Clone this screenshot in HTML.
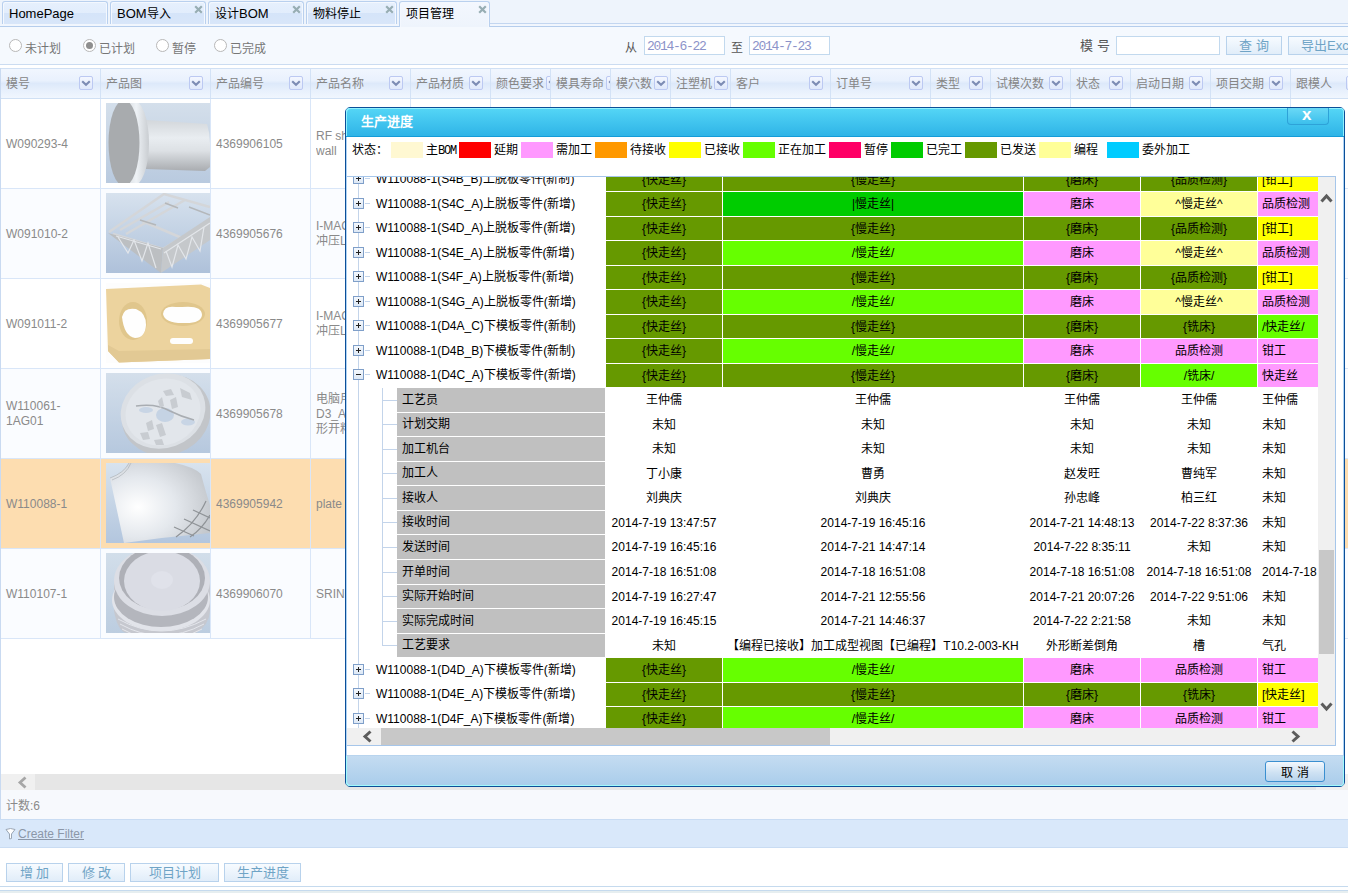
<!DOCTYPE html>
<html lang="zh-CN"><head><meta charset="utf-8"><title>项目管理</title>
<style>
*{box-sizing:border-box;margin:0;padding:0}
html,body{width:1348px;height:893px;overflow:hidden}
body{position:relative;font-family:"Liberation Sans",sans-serif;font-size:12px;background:#fff;color:#000}
.a{position:absolute}
.tab{position:absolute;top:1px;height:23px;box-shadow:inset 1px 1px 0 #f4f8fe,inset -1px 0 0 #f4f8fe;border:1px solid #b9d0ee;border-bottom:none;border-radius:3px 3px 0 0;
 background:linear-gradient(#e6f0fd 0%,#e2edfc 50%,#d5e4f9 52%,#d8e6f9 100%);font-size:13px;line-height:16px;padding:4px 0 0 6px;white-space:nowrap}
.tab .x{position:absolute;top:0px;font-size:15px;font-weight:bold;color:#9fb5bb;line-height:15px}
.hd{position:absolute;top:69px;height:29px;font-size:12px;color:#888;line-height:29px;padding-left:6px;white-space:nowrap;overflow:hidden}
.dd{position:absolute;top:77px;width:14px;height:14px;border:1px solid #bcc9f2;border-radius:2px;background:linear-gradient(#f4f7ff,#dfe8fb)}
.dd svg{position:absolute;left:0;top:0}
.vl{position:absolute;width:1px;background:#d9e6f8}
.hl{position:absolute;height:1px;background:#d9e6f8}
.cell{position:absolute;font-size:12px;color:#8a8a8a;line-height:16px}
.btn{position:absolute;height:19px;border:1px solid #b8d2ec;background:linear-gradient(#f7fbff,#e1edf9);color:#6fa4c6;font-size:13px;text-align:center;line-height:17px;white-space:nowrap}
.lg{position:absolute;top:142px;width:32px;height:16px}
.lt{position:absolute;top:141px;font-size:12px;line-height:18px;color:#000;white-space:nowrap}
.tr{position:absolute;left:347px;width:971px}
.c{position:absolute;top:0;height:100%;text-align:center;font-size:12px;line-height:16px;white-space:nowrap;overflow:hidden;display:flex;align-items:center;justify-content:center;color:#000}
.c6{justify-content:flex-start;padding-left:4px}
</style></head><body>

<div class="a" style="left:0;top:0;width:1348px;height:26px;background:#eef4fc"></div>
<div class="a" style="left:0;top:26px;width:1348px;height:1px;background:#b5cdec"></div>
<div class="a" style="left:0;top:24px;width:1348px;height:2px;background:#f1f6fd"></div>
<div class="a" style="left:489px;top:23px;width:859px;height:1px;background:#c3d6f0"></div>
<div class="tab" style="left:2px;width:106px;">HomePage</div>
<div class="tab" style="left:110px;width:96px;">BOM<span style="font-size:12px">导入</span><svg class="x" style="left:83px;top:3px" width="9" height="9"><path d="M1.2 1.2 L7.8 7.8 M7.8 1.2 L1.2 7.8" stroke="#97adb3" stroke-width="2.2"/></svg></div>
<div class="tab" style="left:208px;width:96px;"><span style="font-size:12px">设计</span>BOM<svg class="x" style="left:83px;top:3px" width="9" height="9"><path d="M1.2 1.2 L7.8 7.8 M7.8 1.2 L1.2 7.8" stroke="#97adb3" stroke-width="2.2"/></svg></div>
<div class="tab" style="left:306px;width:91px;"><span style="font-size:12px">物料停止</span><svg class="x" style="left:78px;top:3px" width="9" height="9"><path d="M1.2 1.2 L7.8 7.8 M7.8 1.2 L1.2 7.8" stroke="#97adb3" stroke-width="2.2"/></svg></div>
<div class="tab" style="left:399px;width:91px;height:26px;background:linear-gradient(#f3f7fe,#eef4fc);z-index:2;"><span style="font-size:12px">项目管理</span><svg class="x" style="left:78px;top:3px" width="9" height="9"><path d="M1.2 1.2 L7.8 7.8 M7.8 1.2 L1.2 7.8" stroke="#97adb3" stroke-width="2.2"/></svg></div>
<div class="a" style="left:0;top:27px;width:1348px;height:37px;background:#f5f9fe"></div>
<div class="a" style="left:0;top:64px;width:1348px;height:1px;background:#cbdcf1"></div>
<div class="a" style="left:9px;top:39px;width:13px;height:13px;border-radius:50%;border:1px solid #b8b8b8;background:#fff"></div>
<div class="a" style="left:25px;top:41px;font-size:12px;color:#767676;line-height:16px">未计划</div>
<div class="a" style="left:83px;top:39px;width:13px;height:13px;border-radius:50%;border:1px solid #b8b8b8;background:#fff"></div>
<div class="a" style="left:86px;top:42px;width:7px;height:7px;border-radius:50%;background:#8e8e8e"></div>
<div class="a" style="left:99px;top:41px;font-size:12px;color:#767676;line-height:16px">已计划</div>
<div class="a" style="left:156px;top:39px;width:13px;height:13px;border-radius:50%;border:1px solid #b8b8b8;background:#fff"></div>
<div class="a" style="left:172px;top:41px;font-size:12px;color:#767676;line-height:16px">暂停</div>
<div class="a" style="left:214px;top:39px;width:13px;height:13px;border-radius:50%;border:1px solid #b8b8b8;background:#fff"></div>
<div class="a" style="left:230px;top:41px;font-size:12px;color:#767676;line-height:16px">已完成</div>
<div class="a" style="left:625px;top:40px;font-size:12px;color:#555;line-height:16px">从</div>
<div class="a" style="left:731px;top:40px;font-size:12px;color:#555;line-height:16px">至</div>
<div class="a" style="left:644px;top:36px;width:81px;height:19px;border:1px solid #c2d9ee;background:#fff;font-family:'Liberation Mono',monospace;font-size:13px;letter-spacing:-1.3px;color:#8c93c9;padding-left:2px;line-height:19px">2014-6-22</div>
<div class="a" style="left:749px;top:36px;width:81px;height:19px;border:1px solid #c2d9ee;background:#fff;font-family:'Liberation Mono',monospace;font-size:13px;letter-spacing:-1.3px;color:#8c93c9;padding-left:2px;line-height:19px">2014-7-23</div>
<div class="a" style="left:1080px;top:38px;font-size:13px;color:#555;line-height:16px;letter-spacing:0px">模 号</div>
<div class="a" style="left:1116px;top:36px;width:104px;height:19px;border:1px solid #c2d9ee;background:#fff"></div>
<div class="btn" style="left:1226px;top:36px;width:56px">查 询</div>
<div class="btn" style="left:1288px;top:36px;width:80px;text-align:left;padding-left:12px">导出Excel</div>
<div class="a" style="left:0;top:68px;width:1348px;height:31px;border-top:1px solid #d0e0f4;border-bottom:1px solid #d0e0f4;background:linear-gradient(#f1f6fe 0%,#e9f1fd 40%,#dde9fa 50%,#e6effc 70%,#f0f6fe 100%)"></div>
<div class="a" style="left:0px;top:69px;width:100px;height:29px;overflow:hidden">
<div style="position:absolute;left:6px;top:1px;line-height:29px;font-size:12px;color:#858585;white-space:nowrap">模号</div>
<div class="dd" style="left:79px;top:7px"><svg width="12" height="12"><path d="M2.2 4.2 L6 7.8 L9.8 4.2" fill="none" stroke="#7d8cb4" stroke-width="2.2"/></svg></div>
</div>
<div class="a" style="left:100px;top:69px;width:110px;height:29px;overflow:hidden">
<div style="position:absolute;left:6px;top:1px;line-height:29px;font-size:12px;color:#858585;white-space:nowrap">产品图</div>
<div class="dd" style="left:89px;top:7px"><svg width="12" height="12"><path d="M2.2 4.2 L6 7.8 L9.8 4.2" fill="none" stroke="#7d8cb4" stroke-width="2.2"/></svg></div>
</div>
<div class="a" style="left:210px;top:69px;width:100px;height:29px;overflow:hidden">
<div style="position:absolute;left:6px;top:1px;line-height:29px;font-size:12px;color:#858585;white-space:nowrap">产品编号</div>
<div class="dd" style="left:79px;top:7px"><svg width="12" height="12"><path d="M2.2 4.2 L6 7.8 L9.8 4.2" fill="none" stroke="#7d8cb4" stroke-width="2.2"/></svg></div>
</div>
<div class="a" style="left:310px;top:69px;width:100px;height:29px;overflow:hidden">
<div style="position:absolute;left:6px;top:1px;line-height:29px;font-size:12px;color:#858585;white-space:nowrap">产品名称</div>
<div class="dd" style="left:79px;top:7px"><svg width="12" height="12"><path d="M2.2 4.2 L6 7.8 L9.8 4.2" fill="none" stroke="#7d8cb4" stroke-width="2.2"/></svg></div>
</div>
<div class="a" style="left:410px;top:69px;width:80px;height:29px;overflow:hidden">
<div style="position:absolute;left:6px;top:1px;line-height:29px;font-size:12px;color:#858585;white-space:nowrap">产品材质</div>
<div class="dd" style="left:59px;top:7px"><svg width="12" height="12"><path d="M2.2 4.2 L6 7.8 L9.8 4.2" fill="none" stroke="#7d8cb4" stroke-width="2.2"/></svg></div>
</div>
<div class="a" style="left:490px;top:69px;width:60px;height:29px;overflow:hidden">
<div style="position:absolute;left:6px;top:1px;line-height:29px;font-size:12px;color:#858585;white-space:nowrap">颜色要求</div>
<div class="dd" style="left:56px;top:7px"><svg width="12" height="12"><path d="M2.2 4.2 L6 7.8 L9.8 4.2" fill="none" stroke="#7d8cb4" stroke-width="2.2"/></svg></div>
</div>
<div class="a" style="left:550px;top:69px;width:60px;height:29px;overflow:hidden">
<div style="position:absolute;left:6px;top:1px;line-height:29px;font-size:12px;color:#858585;white-space:nowrap">模具寿命</div>
<div class="dd" style="left:56px;top:7px"><svg width="12" height="12"><path d="M2.2 4.2 L6 7.8 L9.8 4.2" fill="none" stroke="#7d8cb4" stroke-width="2.2"/></svg></div>
</div>
<div class="a" style="left:610px;top:69px;width:60px;height:29px;overflow:hidden">
<div style="position:absolute;left:6px;top:1px;line-height:29px;font-size:12px;color:#858585;white-space:nowrap">模穴数</div>
<div class="dd" style="left:44px;top:7px"><svg width="12" height="12"><path d="M2.2 4.2 L6 7.8 L9.8 4.2" fill="none" stroke="#7d8cb4" stroke-width="2.2"/></svg></div>
</div>
<div class="a" style="left:670px;top:69px;width:60px;height:29px;overflow:hidden">
<div style="position:absolute;left:6px;top:1px;line-height:29px;font-size:12px;color:#858585;white-space:nowrap">注塑机</div>
<div class="dd" style="left:44px;top:7px"><svg width="12" height="12"><path d="M2.2 4.2 L6 7.8 L9.8 4.2" fill="none" stroke="#7d8cb4" stroke-width="2.2"/></svg></div>
</div>
<div class="a" style="left:730px;top:69px;width:100px;height:29px;overflow:hidden">
<div style="position:absolute;left:6px;top:1px;line-height:29px;font-size:12px;color:#858585;white-space:nowrap">客户</div>
<div class="dd" style="left:79px;top:7px"><svg width="12" height="12"><path d="M2.2 4.2 L6 7.8 L9.8 4.2" fill="none" stroke="#7d8cb4" stroke-width="2.2"/></svg></div>
</div>
<div class="a" style="left:830px;top:69px;width:100px;height:29px;overflow:hidden">
<div style="position:absolute;left:6px;top:1px;line-height:29px;font-size:12px;color:#858585;white-space:nowrap">订单号</div>
<div class="dd" style="left:79px;top:7px"><svg width="12" height="12"><path d="M2.2 4.2 L6 7.8 L9.8 4.2" fill="none" stroke="#7d8cb4" stroke-width="2.2"/></svg></div>
</div>
<div class="a" style="left:930px;top:69px;width:60px;height:29px;overflow:hidden">
<div style="position:absolute;left:6px;top:1px;line-height:29px;font-size:12px;color:#858585;white-space:nowrap">类型</div>
<div class="dd" style="left:39px;top:7px"><svg width="12" height="12"><path d="M2.2 4.2 L6 7.8 L9.8 4.2" fill="none" stroke="#7d8cb4" stroke-width="2.2"/></svg></div>
</div>
<div class="a" style="left:990px;top:69px;width:80px;height:29px;overflow:hidden">
<div style="position:absolute;left:6px;top:1px;line-height:29px;font-size:12px;color:#858585;white-space:nowrap">试模次数</div>
<div class="dd" style="left:59px;top:7px"><svg width="12" height="12"><path d="M2.2 4.2 L6 7.8 L9.8 4.2" fill="none" stroke="#7d8cb4" stroke-width="2.2"/></svg></div>
</div>
<div class="a" style="left:1070px;top:69px;width:60px;height:29px;overflow:hidden">
<div style="position:absolute;left:6px;top:1px;line-height:29px;font-size:12px;color:#858585;white-space:nowrap">状态</div>
<div class="dd" style="left:39px;top:7px"><svg width="12" height="12"><path d="M2.2 4.2 L6 7.8 L9.8 4.2" fill="none" stroke="#7d8cb4" stroke-width="2.2"/></svg></div>
</div>
<div class="a" style="left:1130px;top:69px;width:80px;height:29px;overflow:hidden">
<div style="position:absolute;left:6px;top:1px;line-height:29px;font-size:12px;color:#858585;white-space:nowrap">启动日期</div>
<div class="dd" style="left:59px;top:7px"><svg width="12" height="12"><path d="M2.2 4.2 L6 7.8 L9.8 4.2" fill="none" stroke="#7d8cb4" stroke-width="2.2"/></svg></div>
</div>
<div class="a" style="left:1210px;top:69px;width:80px;height:29px;overflow:hidden">
<div style="position:absolute;left:6px;top:1px;line-height:29px;font-size:12px;color:#858585;white-space:nowrap">项目交期</div>
<div class="dd" style="left:59px;top:7px"><svg width="12" height="12"><path d="M2.2 4.2 L6 7.8 L9.8 4.2" fill="none" stroke="#7d8cb4" stroke-width="2.2"/></svg></div>
</div>
<div class="a" style="left:1290px;top:69px;width:58px;height:29px;overflow:hidden">
<div style="position:absolute;left:6px;top:1px;line-height:29px;font-size:12px;color:#858585;white-space:nowrap">跟模人</div>
<div class="dd" style="left:56px;top:7px"><svg width="12" height="12"><path d="M2.2 4.2 L6 7.8 L9.8 4.2" fill="none" stroke="#7d8cb4" stroke-width="2.2"/></svg></div>
</div>
<div class="vl" style="left:100px;top:69px;height:29px;background:#d3e2f6"></div>
<div class="vl" style="left:210px;top:69px;height:29px;background:#d3e2f6"></div>
<div class="vl" style="left:310px;top:69px;height:29px;background:#d3e2f6"></div>
<div class="vl" style="left:410px;top:69px;height:29px;background:#d3e2f6"></div>
<div class="vl" style="left:490px;top:69px;height:29px;background:#d3e2f6"></div>
<div class="vl" style="left:550px;top:69px;height:29px;background:#d3e2f6"></div>
<div class="vl" style="left:610px;top:69px;height:29px;background:#d3e2f6"></div>
<div class="vl" style="left:670px;top:69px;height:29px;background:#d3e2f6"></div>
<div class="vl" style="left:730px;top:69px;height:29px;background:#d3e2f6"></div>
<div class="vl" style="left:830px;top:69px;height:29px;background:#d3e2f6"></div>
<div class="vl" style="left:930px;top:69px;height:29px;background:#d3e2f6"></div>
<div class="vl" style="left:990px;top:69px;height:29px;background:#d3e2f6"></div>
<div class="vl" style="left:1070px;top:69px;height:29px;background:#d3e2f6"></div>
<div class="vl" style="left:1130px;top:69px;height:29px;background:#d3e2f6"></div>
<div class="vl" style="left:1210px;top:69px;height:29px;background:#d3e2f6"></div>
<div class="vl" style="left:1290px;top:69px;height:29px;background:#d3e2f6"></div>
<div class="a" style="left:0;top:99px;width:1348px;height:90px;background:#ffffff"></div>
<div class="hl" style="left:0;top:188px;width:1348px"></div>
<div class="a" style="left:6px;top:99px;height:90px;display:flex;align-items:center;font-size:12px;color:#8a8a8a;line-height:15px">W090293-4</div>
<div class="a" style="left:216px;top:99px;height:90px;display:flex;align-items:center;font-size:12px;color:#8a8a8a;line-height:15px">4369906105</div>
<div class="a" style="left:316px;top:99px;height:90px;display:flex;align-items:center;font-size:12px;color:#8a8a8a;line-height:15px;width:40px;overflow:hidden;white-space:nowrap">RF sh<br>wall</div>
<div class="a" style="left:106px;top:103px;width:104px;height:80px;overflow:hidden"><svg width="104" height="80" viewBox="0 0 104 80"><defs>
<linearGradient id="b1" x1="0" y1="0" x2="0" y2="1"><stop offset="0" stop-color="#d4dfeb"/><stop offset="1" stop-color="#b9cadf"/></linearGradient>
<linearGradient id="c1" x1="0" y1="0" x2="0" y2="1"><stop offset="0" stop-color="#d3d7db"/><stop offset=".35" stop-color="#e9edf1"/><stop offset=".6" stop-color="#dde1e5"/><stop offset="1" stop-color="#a9acb0"/></linearGradient>
<linearGradient id="r1" x1="0" y1="0" x2="1" y2="0"><stop offset="0" stop-color="#c3c7cb"/><stop offset=".6" stop-color="#eef2f6"/><stop offset="1" stop-color="#c9cdd1"/></linearGradient></defs>
<rect width="104" height="80" fill="url(#b1)"/>
<path d="M40 17 L101 21 Q104 30 104 40 L104 64 L99 68 L40 66 Z" fill="url(#c1)"/>
<ellipse cx="27" cy="40" rx="16" ry="43" fill="url(#r1)"/>
<ellipse cx="18" cy="40" rx="15.5" ry="43" fill="#a8abae"/>
</svg></div>
<div class="a" style="left:0;top:189px;width:1348px;height:90px;background:#fafcff"></div>
<div class="hl" style="left:0;top:278px;width:1348px"></div>
<div class="a" style="left:6px;top:189px;height:90px;display:flex;align-items:center;font-size:12px;color:#8a8a8a;line-height:15px">W091010-2</div>
<div class="a" style="left:216px;top:189px;height:90px;display:flex;align-items:center;font-size:12px;color:#8a8a8a;line-height:15px">4369905676</div>
<div class="a" style="left:316px;top:189px;height:90px;display:flex;align-items:center;font-size:12px;color:#8a8a8a;line-height:15px;width:40px;overflow:hidden;white-space:nowrap">I-MAC<br>冲压L</div>
<div class="a" style="left:106px;top:193px;width:104px;height:80px;overflow:hidden"><svg width="104" height="80" viewBox="0 0 104 80"><defs>
<linearGradient id="b2" x1="0" y1="0" x2="0" y2="1"><stop offset="0" stop-color="#d7e2ee"/><stop offset="1" stop-color="#aec1da"/></linearGradient></defs>
<rect width="104" height="80" fill="url(#b2)"/>
<g fill="none" stroke="#d4d6d9" stroke-width="2.5">
<path d="M3 39 L58 1 L104 14"/><path d="M7 41 L57 56 L104 27"/><path d="M20 41 L79 7"/><path d="M36 28 L76 45"/><path d="M14 37 L63 9"/></g>
<g fill="none" stroke="#b4b7ba" stroke-width="1.5"><path d="M59 10 L72 15"/><path d="M83 14 L104 22"/><path d="M34 27 L50 32"/></g>
<path d="M2 40 L57 55 L55 80 Z" fill="#bcbfc2"/>
<path d="M57 55 L104 24 L104 47 L55 80 Z" fill="#c5c8cb"/>
<g fill="none" stroke="#e3e6ea" stroke-width="1.2">
<path d="M12 44 L22 60 L28 47 L36 68 L42 50 L50 75"/><path d="M60 58 L66 74 L72 52 L80 66 L86 44 L94 58 L98 34"/><path d="M10 43 L55 56"/><path d="M58 60 L104 30"/></g>
</svg></div>
<div class="a" style="left:0;top:279px;width:1348px;height:90px;background:#ffffff"></div>
<div class="hl" style="left:0;top:368px;width:1348px"></div>
<div class="a" style="left:6px;top:279px;height:90px;display:flex;align-items:center;font-size:12px;color:#8a8a8a;line-height:15px">W091011-2</div>
<div class="a" style="left:216px;top:279px;height:90px;display:flex;align-items:center;font-size:12px;color:#8a8a8a;line-height:15px">4369905677</div>
<div class="a" style="left:316px;top:279px;height:90px;display:flex;align-items:center;font-size:12px;color:#8a8a8a;line-height:15px;width:40px;overflow:hidden;white-space:nowrap">I-MAC<br>冲压L</div>
<div class="a" style="left:106px;top:283px;width:104px;height:80px;overflow:hidden"><svg width="104" height="80" viewBox="0 0 104 80">
<rect width="104" height="80" fill="#fdfdfd"/>
<path d="M0 6 L95 1.5 L104 5 L104 76 L13 79.5 L2 68 Z" fill="#ecd39e"/>
<path d="M2 62 L13 68 L104 66 L104 76 L13 79.5 L2 68 Z" fill="#e2c994"/>
<ellipse cx="27" cy="38" rx="14" ry="19" fill="#e0c68c"/>
<path d="M16 34 Q18 24 30 26 Q40 30 40 42 Q39 55 29 55 Q18 53 16 34 Z" fill="#fefefe"/>
<ellipse cx="77" cy="31" rx="22" ry="12" fill="#e0c68c"/>
<path d="M57 31 Q58 22 70 24 L76 24 Q96 22 96 32 Q95 40 80 40 Q59 41 57 31 Z" fill="#fefefe"/>
<rect x="64" y="55" width="23" height="6" rx="3" fill="#fefefe"/>
</svg></div>
<div class="a" style="left:0;top:369px;width:1348px;height:90px;background:#fafcff"></div>
<div class="hl" style="left:0;top:458px;width:1348px"></div>
<div class="a" style="left:6px;top:369px;height:90px;display:flex;align-items:center;font-size:12px;color:#8a8a8a;line-height:15px">W110061-<br>1AG01</div>
<div class="a" style="left:216px;top:369px;height:90px;display:flex;align-items:center;font-size:12px;color:#8a8a8a;line-height:15px">4369905678</div>
<div class="a" style="left:316px;top:369px;height:90px;display:flex;align-items:center;font-size:12px;color:#8a8a8a;line-height:15px;width:40px;overflow:hidden;white-space:nowrap">电脑用<br>D3_A<br>形开料</div>
<div class="a" style="left:106px;top:373px;width:104px;height:80px;overflow:hidden"><svg width="104" height="80" viewBox="0 0 104 80"><defs>
<linearGradient id="b4" x1="0" y1="0" x2="0" y2="1"><stop offset="0" stop-color="#d4dfeb"/><stop offset="1" stop-color="#b6c8de"/></linearGradient></defs>
<rect width="104" height="80" fill="url(#b4)"/>
<ellipse cx="60" cy="42" rx="45" ry="40" transform="rotate(-20 60 42)" fill="#c2c5c9"/>
<ellipse cx="57" cy="38" rx="43" ry="37" transform="rotate(-20 57 38)" fill="#dce0e5"/>
<ellipse cx="57" cy="39" rx="38" ry="33" transform="rotate(-20 57 39)" fill="#e2e6eb"/>
<ellipse cx="59" cy="42" rx="9" ry="7" fill="#c5d3e4"/><ellipse cx="40" cy="37" rx="7" ry="3" fill="#c8d5e5"/><ellipse cx="82" cy="49" rx="7" ry="3.5" fill="#c8d5e5"/>
<path d="M30 33 Q50 30 64 38 Q76 44 88 47" fill="none" stroke="#a9adb2" stroke-width="1.5"/>
<g fill="#c8ccd1"><path d="M57 18 L65 16 L68 22 L60 23 Z"/><path d="M74 15 L84 20 L86 27 L76 24 Z"/><path d="M52 28 L56 24 L58 33 L54 35 Z"/><path d="M64 27 L70 24 L72 34 L66 36 Z"/>
<path d="M40 50 L46 47 L48 56 L42 58 Z"/><path d="M50 52 L56 50 L60 62 L54 64 Z"/><path d="M34 60 L42 59 L44 66 L37 67 Z"/><path d="M48 67 L56 66 L58 72 L50 72 Z"/></g>
</svg></div>
<div class="a" style="left:0;top:459px;width:1348px;height:90px;background:#fdddb0"></div>
<div class="hl" style="left:0;top:548px;width:1348px"></div>
<div class="a" style="left:6px;top:459px;height:90px;display:flex;align-items:center;font-size:12px;color:#8a8a8a;line-height:15px">W110088-1</div>
<div class="a" style="left:216px;top:459px;height:90px;display:flex;align-items:center;font-size:12px;color:#8a8a8a;line-height:15px">4369905942</div>
<div class="a" style="left:316px;top:459px;height:90px;display:flex;align-items:center;font-size:12px;color:#8a8a8a;line-height:15px;width:40px;overflow:hidden;white-space:nowrap">plate</div>
<div class="a" style="left:106px;top:463px;width:104px;height:80px;overflow:hidden"><svg width="104" height="80" viewBox="0 0 104 80"><defs>
<linearGradient id="b5" x1="0" y1="0" x2="0" y2="1"><stop offset="0" stop-color="#d8e3ee"/><stop offset="1" stop-color="#b3c6de"/></linearGradient>
<radialGradient id="w5" cx=".28" cy=".55" r=".75"><stop offset="0" stop-color="#ffffff"/><stop offset=".5" stop-color="#e4e8ed"/><stop offset="1" stop-color="#c4c8cd"/></radialGradient></defs>
<rect width="104" height="80" fill="url(#b5)"/>
<path d="M4 15 Q18 10 23 0 L69 0 Q88 4 95 11 Q100 30 104 42 L104 70 Q60 74 18 80 Z" fill="url(#w5)"/>
<path d="M4 15 Q18 10 23 0 M6 17 Q20 12 25 0" fill="none" stroke="#aeb3b8" stroke-width=".7"/>
<g fill="none" stroke="#8f9397" stroke-width="1.2"><path d="M87 47 L104 55"/><path d="M78 56 L104 68"/><path d="M68 64 L88 73"/><path d="M100 38 Q90 60 70 74"/><path d="M104 52 Q96 66 84 74"/></g>
</svg></div>
<div class="a" style="left:0;top:549px;width:1348px;height:90px;background:#fafcff"></div>
<div class="hl" style="left:0;top:638px;width:1348px"></div>
<div class="a" style="left:6px;top:549px;height:90px;display:flex;align-items:center;font-size:12px;color:#8a8a8a;line-height:15px">W110107-1</div>
<div class="a" style="left:216px;top:549px;height:90px;display:flex;align-items:center;font-size:12px;color:#8a8a8a;line-height:15px">4369906070</div>
<div class="a" style="left:316px;top:549px;height:90px;display:flex;align-items:center;font-size:12px;color:#8a8a8a;line-height:15px;width:40px;overflow:hidden;white-space:nowrap">SRING</div>
<div class="a" style="left:106px;top:553px;width:104px;height:80px;overflow:hidden"><svg width="104" height="80" viewBox="0 0 104 80"><defs>
<linearGradient id="b6" x1="0" y1="0" x2="0" y2="1"><stop offset="0" stop-color="#d2deea"/><stop offset="1" stop-color="#bccde0"/></linearGradient></defs>
<rect width="104" height="80" fill="url(#b6)"/>
<path d="M8 28 L8 58 Q12 80 22 80 L90 80 Q103 72 104 58 L104 28 Z" fill="#c6c8cf"/>
<g fill="none" stroke="#e4e6ec" stroke-width="1"><path d="M12 66 Q55 90 100 66"/><path d="M14 71 Q55 94 98 71"/><path d="M16 76 Q55 98 96 76"/></g>
<ellipse cx="55" cy="47" rx="49" ry="31" fill="#e2e4ea"/>
<ellipse cx="55" cy="44" rx="47" ry="30" fill="#b4b6bd"/>
<ellipse cx="56" cy="28" rx="48" ry="35" fill="#dcdee5"/>
<ellipse cx="56" cy="25" rx="43" ry="32" fill="#aeb0b7"/>
<ellipse cx="56" cy="28" rx="38" ry="30" fill="#dadce4"/>
<ellipse cx="56" cy="27" rx="11" ry="9" fill="#e0e2ea"/>
</svg></div>
<div class="vl" style="left:100px;top:99px;height:540px"></div>
<div class="vl" style="left:210px;top:99px;height:540px"></div>
<div class="vl" style="left:310px;top:99px;height:540px"></div>
<div class="vl" style="left:410px;top:99px;height:540px"></div>
<div class="vl" style="left:490px;top:99px;height:540px"></div>
<div class="vl" style="left:550px;top:99px;height:540px"></div>
<div class="vl" style="left:610px;top:99px;height:540px"></div>
<div class="vl" style="left:670px;top:99px;height:540px"></div>
<div class="vl" style="left:730px;top:99px;height:540px"></div>
<div class="vl" style="left:830px;top:99px;height:540px"></div>
<div class="vl" style="left:930px;top:99px;height:540px"></div>
<div class="vl" style="left:990px;top:99px;height:540px"></div>
<div class="vl" style="left:1070px;top:99px;height:540px"></div>
<div class="vl" style="left:1130px;top:99px;height:540px"></div>
<div class="vl" style="left:1210px;top:99px;height:540px"></div>
<div class="vl" style="left:1290px;top:99px;height:540px"></div>
<div class="vl" style="left:0;top:68px;height:751px;background:#c9daf1;z-index:3"></div>
<div class="a" style="left:345px;top:107px;width:1000px;height:680px;border:1px solid #0c4f98;border-radius:5px;background:#fff;box-shadow:inset 0 0 0 1px #aed3f5;z-index:10"></div>
<div class="a" style="z-index:11;left:346px;top:108px;width:998px;height:29px;border-radius:4px 4px 0 0;background:linear-gradient(#55d6f6 0%,#45c8f0 40%,#2fb4e7 100%);border-bottom:1px solid #149cd8;box-shadow:inset 1px 1px 0 #90f2ff,inset -1px 0 0 #90f2ff"></div>
<div class="a" style="z-index:11;left:361px;top:114px;font-size:13px;font-weight:bold;color:#fff;line-height:16px">生产进度</div>
<div class="a" style="z-index:11;left:1287px;top:108px;width:42px;height:17px;border:1px solid #2ea2d8;border-top:none;border-radius:0 0 4px 4px;background:linear-gradient(#6ad9f6,#3cbfec)"></div>
<div class="a" style="z-index:11;left:1302px;top:105px;font-size:17px;font-weight:bold;color:#fff;line-height:20px">x</div>
<div class="a" style="z-index:11;left:352px;top:141px;font-size:12px;line-height:18px">状态：</div>
<div class="lg" style="z-index:11;left:391px;background:#fff8d2"></div>
<div class="lt" style="z-index:11;left:426px">主<span style="font-family:Liberation Mono,monospace;letter-spacing:-1.2px">BOM</span></div>
<div class="lg" style="z-index:11;left:459px;background:#ff0000"></div>
<div class="lt" style="z-index:11;left:494px">延期</div>
<div class="lg" style="z-index:11;left:521px;background:#ff99ff"></div>
<div class="lt" style="z-index:11;left:556px">需加工</div>
<div class="lg" style="z-index:11;left:595px;background:#ff9900"></div>
<div class="lt" style="z-index:11;left:630px">待接收</div>
<div class="lg" style="z-index:11;left:669px;background:#ffff00"></div>
<div class="lt" style="z-index:11;left:704px">已接收</div>
<div class="lg" style="z-index:11;left:743px;background:#66ff00"></div>
<div class="lt" style="z-index:11;left:778px">正在加工</div>
<div class="lg" style="z-index:11;left:829px;background:#ff0066"></div>
<div class="lt" style="z-index:11;left:864px">暂停</div>
<div class="lg" style="z-index:11;left:891px;background:#00cc00"></div>
<div class="lt" style="z-index:11;left:926px">已完工</div>
<div class="lg" style="z-index:11;left:965px;background:#669900"></div>
<div class="lt" style="z-index:11;left:1000px">已发送</div>
<div class="lg" style="z-index:11;left:1039px;background:#ffff99"></div>
<div class="lt" style="z-index:11;left:1074px">编程</div>
<div class="lg" style="z-index:11;left:1107px;background:#00ccff"></div>
<div class="lt" style="z-index:11;left:1142px">委外加工</div>
<div class="a" style="z-index:11;left:347px;top:176px;width:989px;height:570px;border-top:1px solid #a6c6ea;border-right:1px solid #a6c6ea;border-bottom:1px solid #a6c6ea;overflow:hidden">
<div class="a" style="left:11px;top:0;width:1px;height:570px;background:#c3d4ea"></div>
<div class="a" style="left:35px;top:211px;width:1px;height:258px;background:#c3d4ea"></div>
<div class="a" style="left:6px;top:-4px;width:11px;height:11px;border:1px solid #7f9fc9;background:linear-gradient(#f4f8fd,#dde8f5);font-size:0"></div>
<div class="a" style="left:9px;top:1px;width:5px;height:1px;background:#222"></div>
<div class="a" style="left:11px;top:-1px;width:1px;height:5px;background:#222"></div>
<div class="a" style="left:18px;top:1px;width:5px;height:1px;background:#c3d4ea"></div>
<div class="a" style="left:29px;top:-9px;height:23px;line-height:23px;font-size:12px;white-space:nowrap">W110088-1(S4B_B)上脱板零件(新制)</div>
<div class="c" style="left:259px;top:-9px;width:116px;height:23px;background:#669900">{快走丝}</div>
<div class="c" style="left:376px;top:-9px;width:300px;height:23px;background:#669900">{慢走丝}</div>
<div class="c" style="left:677px;top:-9px;width:116px;height:23px;background:#669900">{磨床}</div>
<div class="c" style="left:794px;top:-9px;width:116px;height:23px;background:#669900">{品质检测}</div>
<div class="c c6" style="left:911px;top:-9px;width:116px;height:23px;background:#ffff00">[钳工]</div>
<div class="a" style="left:6px;top:21px;width:11px;height:11px;border:1px solid #7f9fc9;background:linear-gradient(#f4f8fd,#dde8f5);font-size:0"></div>
<div class="a" style="left:9px;top:26px;width:5px;height:1px;background:#222"></div>
<div class="a" style="left:11px;top:24px;width:1px;height:5px;background:#222"></div>
<div class="a" style="left:18px;top:26px;width:5px;height:1px;background:#c3d4ea"></div>
<div class="a" style="left:29px;top:15px;height:24px;line-height:24px;font-size:12px;white-space:nowrap">W110088-1(S4C_A)上脱板零件(新增)</div>
<div class="c" style="left:259px;top:15px;width:116px;height:24px;background:#669900">{快走丝}</div>
<div class="c" style="left:376px;top:15px;width:300px;height:24px;background:#00cc00">|慢走丝|</div>
<div class="c" style="left:677px;top:15px;width:116px;height:24px;background:#ff99ff">磨床</div>
<div class="c" style="left:794px;top:15px;width:116px;height:24px;background:#ffff99">^慢走丝^</div>
<div class="c c6" style="left:911px;top:15px;width:116px;height:24px;background:#ff99ff">品质检测</div>
<div class="a" style="left:6px;top:45px;width:11px;height:11px;border:1px solid #7f9fc9;background:linear-gradient(#f4f8fd,#dde8f5);font-size:0"></div>
<div class="a" style="left:9px;top:50px;width:5px;height:1px;background:#222"></div>
<div class="a" style="left:11px;top:48px;width:1px;height:5px;background:#222"></div>
<div class="a" style="left:18px;top:50px;width:5px;height:1px;background:#c3d4ea"></div>
<div class="a" style="left:29px;top:40px;height:23px;line-height:23px;font-size:12px;white-space:nowrap">W110088-1(S4D_A)上脱板零件(新增)</div>
<div class="c" style="left:259px;top:40px;width:116px;height:23px;background:#669900">{快走丝}</div>
<div class="c" style="left:376px;top:40px;width:300px;height:23px;background:#669900">{慢走丝}</div>
<div class="c" style="left:677px;top:40px;width:116px;height:23px;background:#669900">{磨床}</div>
<div class="c" style="left:794px;top:40px;width:116px;height:23px;background:#669900">{品质检测}</div>
<div class="c c6" style="left:911px;top:40px;width:116px;height:23px;background:#ffff00">[钳工]</div>
<div class="a" style="left:6px;top:70px;width:11px;height:11px;border:1px solid #7f9fc9;background:linear-gradient(#f4f8fd,#dde8f5);font-size:0"></div>
<div class="a" style="left:9px;top:75px;width:5px;height:1px;background:#222"></div>
<div class="a" style="left:11px;top:73px;width:1px;height:5px;background:#222"></div>
<div class="a" style="left:18px;top:75px;width:5px;height:1px;background:#c3d4ea"></div>
<div class="a" style="left:29px;top:64px;height:24px;line-height:24px;font-size:12px;white-space:nowrap">W110088-1(S4E_A)上脱板零件(新增)</div>
<div class="c" style="left:259px;top:64px;width:116px;height:24px;background:#669900">{快走丝}</div>
<div class="c" style="left:376px;top:64px;width:300px;height:24px;background:#66ff00">/慢走丝/</div>
<div class="c" style="left:677px;top:64px;width:116px;height:24px;background:#ff99ff">磨床</div>
<div class="c" style="left:794px;top:64px;width:116px;height:24px;background:#ffff99">^慢走丝^</div>
<div class="c c6" style="left:911px;top:64px;width:116px;height:24px;background:#ff99ff">品质检测</div>
<div class="a" style="left:6px;top:94px;width:11px;height:11px;border:1px solid #7f9fc9;background:linear-gradient(#f4f8fd,#dde8f5);font-size:0"></div>
<div class="a" style="left:9px;top:99px;width:5px;height:1px;background:#222"></div>
<div class="a" style="left:11px;top:97px;width:1px;height:5px;background:#222"></div>
<div class="a" style="left:18px;top:99px;width:5px;height:1px;background:#c3d4ea"></div>
<div class="a" style="left:29px;top:89px;height:23px;line-height:23px;font-size:12px;white-space:nowrap">W110088-1(S4F_A)上脱板零件(新增)</div>
<div class="c" style="left:259px;top:89px;width:116px;height:23px;background:#669900">{快走丝}</div>
<div class="c" style="left:376px;top:89px;width:300px;height:23px;background:#669900">{慢走丝}</div>
<div class="c" style="left:677px;top:89px;width:116px;height:23px;background:#669900">{磨床}</div>
<div class="c" style="left:794px;top:89px;width:116px;height:23px;background:#669900">{品质检测}</div>
<div class="c c6" style="left:911px;top:89px;width:116px;height:23px;background:#ffff00">[钳工]</div>
<div class="a" style="left:6px;top:119px;width:11px;height:11px;border:1px solid #7f9fc9;background:linear-gradient(#f4f8fd,#dde8f5);font-size:0"></div>
<div class="a" style="left:9px;top:124px;width:5px;height:1px;background:#222"></div>
<div class="a" style="left:11px;top:122px;width:1px;height:5px;background:#222"></div>
<div class="a" style="left:18px;top:124px;width:5px;height:1px;background:#c3d4ea"></div>
<div class="a" style="left:29px;top:113px;height:24px;line-height:24px;font-size:12px;white-space:nowrap">W110088-1(S4G_A)上脱板零件(新增)</div>
<div class="c" style="left:259px;top:113px;width:116px;height:24px;background:#669900">{快走丝}</div>
<div class="c" style="left:376px;top:113px;width:300px;height:24px;background:#66ff00">/慢走丝/</div>
<div class="c" style="left:677px;top:113px;width:116px;height:24px;background:#ff99ff">磨床</div>
<div class="c" style="left:794px;top:113px;width:116px;height:24px;background:#ffff99">^慢走丝^</div>
<div class="c c6" style="left:911px;top:113px;width:116px;height:24px;background:#ff99ff">品质检测</div>
<div class="a" style="left:6px;top:143px;width:11px;height:11px;border:1px solid #7f9fc9;background:linear-gradient(#f4f8fd,#dde8f5);font-size:0"></div>
<div class="a" style="left:9px;top:148px;width:5px;height:1px;background:#222"></div>
<div class="a" style="left:11px;top:146px;width:1px;height:5px;background:#222"></div>
<div class="a" style="left:18px;top:148px;width:5px;height:1px;background:#c3d4ea"></div>
<div class="a" style="left:29px;top:138px;height:23px;line-height:23px;font-size:12px;white-space:nowrap">W110088-1(D4A_C)下模板零件(新制)</div>
<div class="c" style="left:259px;top:138px;width:116px;height:23px;background:#669900">{快走丝}</div>
<div class="c" style="left:376px;top:138px;width:300px;height:23px;background:#669900">{慢走丝}</div>
<div class="c" style="left:677px;top:138px;width:116px;height:23px;background:#669900">{磨床}</div>
<div class="c" style="left:794px;top:138px;width:116px;height:23px;background:#669900">{铣床}</div>
<div class="c c6" style="left:911px;top:138px;width:116px;height:23px;background:#66ff00">/快走丝/</div>
<div class="a" style="left:6px;top:168px;width:11px;height:11px;border:1px solid #7f9fc9;background:linear-gradient(#f4f8fd,#dde8f5);font-size:0"></div>
<div class="a" style="left:9px;top:173px;width:5px;height:1px;background:#222"></div>
<div class="a" style="left:11px;top:171px;width:1px;height:5px;background:#222"></div>
<div class="a" style="left:18px;top:173px;width:5px;height:1px;background:#c3d4ea"></div>
<div class="a" style="left:29px;top:162px;height:24px;line-height:24px;font-size:12px;white-space:nowrap">W110088-1(D4B_B)下模板零件(新制)</div>
<div class="c" style="left:259px;top:162px;width:116px;height:24px;background:#669900">{快走丝}</div>
<div class="c" style="left:376px;top:162px;width:300px;height:24px;background:#66ff00">/慢走丝/</div>
<div class="c" style="left:677px;top:162px;width:116px;height:24px;background:#ff99ff">磨床</div>
<div class="c" style="left:794px;top:162px;width:116px;height:24px;background:#ff99ff">品质检测</div>
<div class="c c6" style="left:911px;top:162px;width:116px;height:24px;background:#ff99ff">钳工</div>
<div class="a" style="left:6px;top:192px;width:11px;height:11px;border:1px solid #7f9fc9;background:linear-gradient(#f4f8fd,#dde8f5);font-size:0"></div>
<div class="a" style="left:9px;top:197px;width:5px;height:1px;background:#222"></div>
<div class="a" style="left:18px;top:197px;width:5px;height:1px;background:#c3d4ea"></div>
<div class="a" style="left:29px;top:187px;height:23px;line-height:23px;font-size:12px;white-space:nowrap">W110088-1(D4C_A)下模板零件(新增)</div>
<div class="c" style="left:259px;top:187px;width:116px;height:23px;background:#669900">{快走丝}</div>
<div class="c" style="left:376px;top:187px;width:300px;height:23px;background:#669900">{慢走丝}</div>
<div class="c" style="left:677px;top:187px;width:116px;height:23px;background:#669900">{磨床}</div>
<div class="c" style="left:794px;top:187px;width:116px;height:23px;background:#66ff00">/铣床/</div>
<div class="c c6" style="left:911px;top:187px;width:116px;height:23px;background:#ff99ff">快走丝</div>
<div class="a" style="left:36px;top:223px;width:14px;height:1px;background:#c3d4ea"></div>
<div class="a" style="left:50px;top:211px;width:208px;height:24px;background:#c0c0c0;line-height:24px;padding-left:5px;font-size:12px;white-space:nowrap">工艺员</div>
<div class="c" style="left:259px;top:211px;width:116px;height:24px;background:#fff">王仲儒</div>
<div class="c" style="left:376px;top:211px;width:300px;height:24px;background:#fff">王仲儒</div>
<div class="c" style="left:677px;top:211px;width:116px;height:24px;background:#fff">王仲儒</div>
<div class="c" style="left:794px;top:211px;width:116px;height:24px;background:#fff">王仲儒</div>
<div class="c c6" style="left:911px;top:211px;width:116px;height:24px;background:#fff">王仲儒</div>
<div class="a" style="left:36px;top:247px;width:14px;height:1px;background:#c3d4ea"></div>
<div class="a" style="left:50px;top:236px;width:208px;height:23px;background:#c0c0c0;line-height:23px;padding-left:5px;font-size:12px;white-space:nowrap">计划交期</div>
<div class="c" style="left:259px;top:236px;width:116px;height:23px;background:#fff">未知</div>
<div class="c" style="left:376px;top:236px;width:300px;height:23px;background:#fff">未知</div>
<div class="c" style="left:677px;top:236px;width:116px;height:23px;background:#fff">未知</div>
<div class="c" style="left:794px;top:236px;width:116px;height:23px;background:#fff">未知</div>
<div class="c c6" style="left:911px;top:236px;width:116px;height:23px;background:#fff">未知</div>
<div class="a" style="left:36px;top:272px;width:14px;height:1px;background:#c3d4ea"></div>
<div class="a" style="left:50px;top:260px;width:208px;height:24px;background:#c0c0c0;line-height:24px;padding-left:5px;font-size:12px;white-space:nowrap">加工机台</div>
<div class="c" style="left:259px;top:260px;width:116px;height:24px;background:#fff">未知</div>
<div class="c" style="left:376px;top:260px;width:300px;height:24px;background:#fff">未知</div>
<div class="c" style="left:677px;top:260px;width:116px;height:24px;background:#fff">未知</div>
<div class="c" style="left:794px;top:260px;width:116px;height:24px;background:#fff">未知</div>
<div class="c c6" style="left:911px;top:260px;width:116px;height:24px;background:#fff">未知</div>
<div class="a" style="left:36px;top:296px;width:14px;height:1px;background:#c3d4ea"></div>
<div class="a" style="left:50px;top:285px;width:208px;height:23px;background:#c0c0c0;line-height:23px;padding-left:5px;font-size:12px;white-space:nowrap">加工人</div>
<div class="c" style="left:259px;top:285px;width:116px;height:23px;background:#fff">丁小康</div>
<div class="c" style="left:376px;top:285px;width:300px;height:23px;background:#fff">曹勇</div>
<div class="c" style="left:677px;top:285px;width:116px;height:23px;background:#fff">赵发旺</div>
<div class="c" style="left:794px;top:285px;width:116px;height:23px;background:#fff">曹纯军</div>
<div class="c c6" style="left:911px;top:285px;width:116px;height:23px;background:#fff">未知</div>
<div class="a" style="left:36px;top:321px;width:14px;height:1px;background:#c3d4ea"></div>
<div class="a" style="left:50px;top:309px;width:208px;height:24px;background:#c0c0c0;line-height:24px;padding-left:5px;font-size:12px;white-space:nowrap">接收人</div>
<div class="c" style="left:259px;top:309px;width:116px;height:24px;background:#fff">刘典庆</div>
<div class="c" style="left:376px;top:309px;width:300px;height:24px;background:#fff">刘典庆</div>
<div class="c" style="left:677px;top:309px;width:116px;height:24px;background:#fff">孙忠峰</div>
<div class="c" style="left:794px;top:309px;width:116px;height:24px;background:#fff">柏三红</div>
<div class="c c6" style="left:911px;top:309px;width:116px;height:24px;background:#fff">未知</div>
<div class="a" style="left:36px;top:345px;width:14px;height:1px;background:#c3d4ea"></div>
<div class="a" style="left:50px;top:334px;width:208px;height:23px;background:#c0c0c0;line-height:23px;padding-left:5px;font-size:12px;white-space:nowrap">接收时间</div>
<div class="c" style="left:259px;top:334px;width:116px;height:23px;background:#fff">2014-7-19 13:47:57</div>
<div class="c" style="left:376px;top:334px;width:300px;height:23px;background:#fff">2014-7-19 16:45:16</div>
<div class="c" style="left:677px;top:334px;width:116px;height:23px;background:#fff">2014-7-21 14:48:13</div>
<div class="c" style="left:794px;top:334px;width:116px;height:23px;background:#fff">2014-7-22 8:37:36</div>
<div class="c c6" style="left:911px;top:334px;width:116px;height:23px;background:#fff">未知</div>
<div class="a" style="left:36px;top:370px;width:14px;height:1px;background:#c3d4ea"></div>
<div class="a" style="left:50px;top:358px;width:208px;height:24px;background:#c0c0c0;line-height:24px;padding-left:5px;font-size:12px;white-space:nowrap">发送时间</div>
<div class="c" style="left:259px;top:358px;width:116px;height:24px;background:#fff">2014-7-19 16:45:16</div>
<div class="c" style="left:376px;top:358px;width:300px;height:24px;background:#fff">2014-7-21 14:47:14</div>
<div class="c" style="left:677px;top:358px;width:116px;height:24px;background:#fff">2014-7-22 8:35:11</div>
<div class="c" style="left:794px;top:358px;width:116px;height:24px;background:#fff">未知</div>
<div class="c c6" style="left:911px;top:358px;width:116px;height:24px;background:#fff">未知</div>
<div class="a" style="left:36px;top:395px;width:14px;height:1px;background:#c3d4ea"></div>
<div class="a" style="left:50px;top:383px;width:208px;height:24px;background:#c0c0c0;line-height:24px;padding-left:5px;font-size:12px;white-space:nowrap">开单时间</div>
<div class="c" style="left:259px;top:383px;width:116px;height:24px;background:#fff">2014-7-18 16:51:08</div>
<div class="c" style="left:376px;top:383px;width:300px;height:24px;background:#fff">2014-7-18 16:51:08</div>
<div class="c" style="left:677px;top:383px;width:116px;height:24px;background:#fff">2014-7-18 16:51:08</div>
<div class="c" style="left:794px;top:383px;width:116px;height:24px;background:#fff">2014-7-18 16:51:08</div>
<div class="c c6" style="left:911px;top:383px;width:116px;height:24px;background:#fff">2014-7-18 16:51:08</div>
<div class="a" style="left:36px;top:419px;width:14px;height:1px;background:#c3d4ea"></div>
<div class="a" style="left:50px;top:408px;width:208px;height:23px;background:#c0c0c0;line-height:23px;padding-left:5px;font-size:12px;white-space:nowrap">实际开始时间</div>
<div class="c" style="left:259px;top:408px;width:116px;height:23px;background:#fff">2014-7-19 16:27:47</div>
<div class="c" style="left:376px;top:408px;width:300px;height:23px;background:#fff">2014-7-21 12:55:56</div>
<div class="c" style="left:677px;top:408px;width:116px;height:23px;background:#fff">2014-7-21 20:07:26</div>
<div class="c" style="left:794px;top:408px;width:116px;height:23px;background:#fff">2014-7-22 9:51:06</div>
<div class="c c6" style="left:911px;top:408px;width:116px;height:23px;background:#fff">未知</div>
<div class="a" style="left:36px;top:444px;width:14px;height:1px;background:#c3d4ea"></div>
<div class="a" style="left:50px;top:432px;width:208px;height:24px;background:#c0c0c0;line-height:24px;padding-left:5px;font-size:12px;white-space:nowrap">实际完成时间</div>
<div class="c" style="left:259px;top:432px;width:116px;height:24px;background:#fff">2014-7-19 16:45:15</div>
<div class="c" style="left:376px;top:432px;width:300px;height:24px;background:#fff">2014-7-21 14:46:37</div>
<div class="c" style="left:677px;top:432px;width:116px;height:24px;background:#fff">2014-7-22 2:21:58</div>
<div class="c" style="left:794px;top:432px;width:116px;height:24px;background:#fff">未知</div>
<div class="c c6" style="left:911px;top:432px;width:116px;height:24px;background:#fff">未知</div>
<div class="a" style="left:36px;top:468px;width:14px;height:1px;background:#c3d4ea"></div>
<div class="a" style="left:50px;top:457px;width:208px;height:23px;background:#c0c0c0;line-height:23px;padding-left:5px;font-size:12px;white-space:nowrap">工艺要求</div>
<div class="c" style="left:259px;top:457px;width:116px;height:23px;background:#fff">未知</div>
<div class="c" style="left:376px;top:457px;width:300px;height:23px;background:#fff">【编程已接收】加工成型视图【已编程】T10.2-003-KH</div>
<div class="c" style="left:677px;top:457px;width:116px;height:23px;background:#fff">外形断差倒角</div>
<div class="c" style="left:794px;top:457px;width:116px;height:23px;background:#fff">槽</div>
<div class="c c6" style="left:911px;top:457px;width:116px;height:23px;background:#fff">气孔</div>
<div class="a" style="left:6px;top:487px;width:11px;height:11px;border:1px solid #7f9fc9;background:linear-gradient(#f4f8fd,#dde8f5);font-size:0"></div>
<div class="a" style="left:9px;top:492px;width:5px;height:1px;background:#222"></div>
<div class="a" style="left:11px;top:490px;width:1px;height:5px;background:#222"></div>
<div class="a" style="left:18px;top:492px;width:5px;height:1px;background:#c3d4ea"></div>
<div class="a" style="left:29px;top:481px;height:24px;line-height:24px;font-size:12px;white-space:nowrap">W110088-1(D4D_A)下模板零件(新增)</div>
<div class="c" style="left:259px;top:481px;width:116px;height:24px;background:#669900">{快走丝}</div>
<div class="c" style="left:376px;top:481px;width:300px;height:24px;background:#66ff00">/慢走丝/</div>
<div class="c" style="left:677px;top:481px;width:116px;height:24px;background:#ff99ff">磨床</div>
<div class="c" style="left:794px;top:481px;width:116px;height:24px;background:#ff99ff">品质检测</div>
<div class="c c6" style="left:911px;top:481px;width:116px;height:24px;background:#ff99ff">钳工</div>
<div class="a" style="left:6px;top:511px;width:11px;height:11px;border:1px solid #7f9fc9;background:linear-gradient(#f4f8fd,#dde8f5);font-size:0"></div>
<div class="a" style="left:9px;top:516px;width:5px;height:1px;background:#222"></div>
<div class="a" style="left:11px;top:514px;width:1px;height:5px;background:#222"></div>
<div class="a" style="left:18px;top:516px;width:5px;height:1px;background:#c3d4ea"></div>
<div class="a" style="left:29px;top:506px;height:23px;line-height:23px;font-size:12px;white-space:nowrap">W110088-1(D4E_A)下模板零件(新增)</div>
<div class="c" style="left:259px;top:506px;width:116px;height:23px;background:#669900">{快走丝}</div>
<div class="c" style="left:376px;top:506px;width:300px;height:23px;background:#669900">{慢走丝}</div>
<div class="c" style="left:677px;top:506px;width:116px;height:23px;background:#669900">{磨床}</div>
<div class="c" style="left:794px;top:506px;width:116px;height:23px;background:#669900">{铣床}</div>
<div class="c c6" style="left:911px;top:506px;width:116px;height:23px;background:#ffff00">[快走丝]</div>
<div class="a" style="left:6px;top:536px;width:11px;height:11px;border:1px solid #7f9fc9;background:linear-gradient(#f4f8fd,#dde8f5);font-size:0"></div>
<div class="a" style="left:9px;top:541px;width:5px;height:1px;background:#222"></div>
<div class="a" style="left:11px;top:539px;width:1px;height:5px;background:#222"></div>
<div class="a" style="left:18px;top:541px;width:5px;height:1px;background:#c3d4ea"></div>
<div class="a" style="left:29px;top:530px;height:24px;line-height:24px;font-size:12px;white-space:nowrap">W110088-1(D4F_A)下模板零件(新增)</div>
<div class="c" style="left:259px;top:530px;width:116px;height:24px;background:#669900">{快走丝}</div>
<div class="c" style="left:376px;top:530px;width:300px;height:24px;background:#66ff00">/慢走丝/</div>
<div class="c" style="left:677px;top:530px;width:116px;height:24px;background:#ff99ff">磨床</div>
<div class="c" style="left:794px;top:530px;width:116px;height:24px;background:#ff99ff">品质检测</div>
<div class="c c6" style="left:911px;top:530px;width:116px;height:24px;background:#ff99ff">钳工</div>
<div class="a" style="left:971px;top:0;width:17px;height:551px;background:#f0f0f0"></div>
<div class="a" style="left:972px;top:373px;width:15px;height:104px;background:#c8c8c8"></div>
<div class="a" style="left:0;top:551px;width:988px;height:17px;background:#f0f0f0"></div>
<div class="a" style="left:34px;top:551px;width:449px;height:17px;background:#c8c8c8"></div>
</div>
<svg class="a" style="z-index:11;left:1320px;top:193px" width="13" height="10"><path d="M1.5 8.5 L6.5 3 L11.5 8.5" fill="none" stroke="#5c5c5c" stroke-width="3"/></svg>
<svg class="a" style="z-index:11;left:1320px;top:702px" width="13" height="10"><path d="M1.5 1.5 L6.5 7 L11.5 1.5" fill="none" stroke="#5c5c5c" stroke-width="3"/></svg>
<svg class="a" style="z-index:11;left:362px;top:730px" width="10" height="13"><path d="M8.5 1.5 L3 6.5 L8.5 11.5" fill="none" stroke="#5c5c5c" stroke-width="3"/></svg>
<svg class="a" style="z-index:11;left:1291px;top:730px" width="10" height="13"><path d="M1.5 1.5 L7 6.5 L1.5 11.5" fill="none" stroke="#5c5c5c" stroke-width="3"/></svg>
<div class="a" style="z-index:11;left:347px;top:755px;width:996px;height:1px;background:#b8d4ee"></div>
<div class="a" style="z-index:11;left:346px;top:756px;width:998px;height:30px;border-radius:0 0 4px 4px;background:linear-gradient(#c4dcf1,#a9cdeb);box-shadow:inset 1px -1px 0 #a0fafc,inset -1px 0 0 #a0fafc"></div>
<div class="a" style="z-index:11;left:1265px;top:761px;width:60px;height:21px;border:1px solid #3a8fd0;border-radius:3px;background:linear-gradient(#f3f8fd,#cfe2f3 55%,#b9d5ee);font-size:12px;text-align:center;line-height:19px;padding-top:2px">取 消</div>
<div class="a" style="left:1px;top:774px;width:1347px;height:16px;background:#e6e6e6"></div>
<div class="a" style="left:1px;top:774px;width:34px;height:16px;background:#f0f0f0"></div>
<div class="a" style="left:1316px;top:774px;width:32px;height:16px;background:#f0f0f0"></div>
<svg class="a" style="left:17px;top:776px" width="11" height="13"><path d="M8.5 1.5 L3 6.5 L8.5 11.5" fill="none" stroke="#a6a6a6" stroke-width="2.8"/></svg>
<div class="a" style="left:1px;top:790px;width:1347px;height:29px;background:#f7f9fd"></div>
<div class="a" style="left:6px;top:798px;font-size:12px;color:#8a8a8a;line-height:16px">计数:6</div>
<div class="a" style="left:0;top:819px;width:1348px;height:29px;background:#d9e8fa;border-top:1px solid #c9dcf3;border-bottom:1px solid #c9dcf3"></div>
<div class="a" style="left:18px;top:827px;font-size:12px;color:#8b97a8;line-height:15px;text-decoration:underline">Create Filter</div>
<svg class="a" style="left:5px;top:828px" width="11" height="12" viewBox="0 0 11 12"><path d="M1 1.5 Q5.5 -0.5 10 1.5 L6.5 6 L6.5 10.5 L4.5 11 L4.5 6 Z" fill="#fff" stroke="#9aa6b4" stroke-width="1"/></svg>
<div class="a" style="left:0;top:848px;width:1348px;height:38px;background:#fff"></div>
<div class="btn" style="left:6px;top:863px;width:57px;height:19px;line-height:17px">增 加</div>
<div class="btn" style="left:68px;top:863px;width:57px;height:19px;line-height:17px">修 改</div>
<div class="btn" style="left:130px;top:863px;width:89px;height:19px;line-height:17px">项目计划</div>
<div class="btn" style="left:224px;top:863px;width:77px;height:19px;line-height:17px">生产进度</div>
<div class="a" style="left:0;top:886px;width:1348px;height:1px;background:#c5daee"></div>
<div class="a" style="left:0;top:887px;width:1348px;height:3px;background:#fff"></div>
<div class="a" style="left:0;top:890px;width:1348px;height:1px;background:#c5daee"></div>
<div class="a" style="left:0;top:891px;width:1348px;height:2px;background:#e6eef0"></div>
</body></html>
